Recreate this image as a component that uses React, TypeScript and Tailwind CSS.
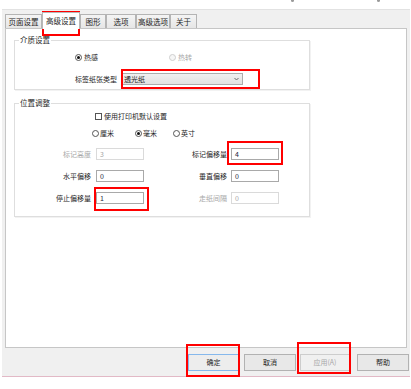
import React from 'react';

const Radio = ({ checked, disabled }: { checked?: boolean; disabled?: boolean }) => (
    <span className={`inline-flex h-[7px] w-[7px] shrink-0 items-center justify-center rounded-full border ${disabled ? 'border-[#cfcfcf] bg-[#f6f6f6]' : 'border-[#555] bg-white'}`}>
        {checked && <span className="h-[3px] w-[3px] rounded-full bg-[#111]" />}
    </span>
);

const Field = ({ value, disabled }: { value: string; disabled?: boolean }) => (
    <div className={`flex h-[12px] w-[48px] items-center border bg-white pl-[3px] text-[7px] leading-none ${disabled ? 'border-[#dadada] text-[#a8a8a8]' : 'border-[#a9a9a9] text-[#1d2340]'}`}>
        {value}
    </div>
);

const Tab = ({ label, w, active }: { label: string; w: string; active?: boolean }) => (
    <div
        className={`flex items-center justify-center border border-b-0 text-[7.5px] leading-none text-[#1e1e1e] ${w} ${active
            ? 'relative top-[1px] z-10 h-[17px] border-[#b8b8b8] bg-white'
            : 'h-[14px] border-[#b4b4b4] bg-gradient-to-b from-[#f4f4f4] to-[#e6e6e6]'}`}
    >
        {label}
    </div>
);

const Btn = ({ label, w, primary, disabled, className = '' }: { label: string; w: string; primary?: boolean; disabled?: boolean; className?: string }) => (
    <div
        className={`flex h-[17px] items-center justify-center border text-[7px] leading-none ${w} ${className} ${primary
            ? 'border-[#86b8ec] bg-[#ededed] text-[#1e1e1e]'
            : disabled
                ? 'border-[#cdcdcd] bg-[#f0f0f0] text-[#a8a8a8]'
                : 'border-[#b2b2b2] bg-[#e8e8e8] text-[#1e1e1e]'}`}
    >
        {label}
    </div>
);

// annotation boxes drawn on top of the screenshot
const Mark = ({ className }: { className: string }) => (
    <div className={`pointer-events-none absolute border-2 border-[#ff0000] ${className}`} />
);

export default function App() {
    return (
        <div className="relative h-[389px] w-[411px] overflow-hidden bg-white font-['Noto_Sans_CJK_SC','Noto_Sans',sans-serif] text-[#1e1e1e]">
            {/* top strip */}
            <div className="flex h-[9px] items-start">
                <span className="ml-[291px] h-[2px] w-[3px] rounded-b bg-[#9a9a9a]" />
                <span className="ml-[83px] h-[2px] w-[3px] rounded-b bg-[#9a9a9a]" />
            </div>

            {/* dialog */}
            <div className="ml-[2px] flex h-[368px] w-[408px] flex-col border-t border-b border-t-[#e2e2e2] border-b-[#e2b9c6] bg-[#f0f0f0]">
                {/* tabs */}
                <div className="mt-[2px] flex h-[16px] items-end pl-[3px]">
                    <Tab label="页面设置" w="w-[37px]" />
                    <Tab label="高级设置" w="w-[38px]" active />
                    <Tab label="图形" w="w-[26px]" />
                    <Tab label="选项" w="w-[30px]" />
                    <Tab label="高级选项" w="w-[34px]" />
                    <Tab label="关于" w="w-[27px]" />
                </div>

                {/* panel */}
                <div className="ml-[3px] flex h-[320px] w-[402px] flex-col border border-[#c6c6c6] bg-white">
                    {/* 介质设置 */}
                    <div className="relative ml-[8px] mt-[11px] h-[50px] w-[296px] border border-[#dedede] shadow-[1px_1px_0_#f2f2f2]">
                        <span className="absolute -top-[6px] left-[4px] bg-white px-[1px] text-[7.5px] leading-[10px]">介质设置</span>
                        <div className="flex h-[9px] items-center pl-[60px] mt-[12px] text-[7px]">
                            <div className="flex w-[94px] items-center gap-[2px]">
                                <Radio checked />
                                <span>热感</span>
                            </div>
                            <div className="flex items-center gap-[2px] text-[#a8a8a8]">
                                <Radio disabled />
                                <span>热转</span>
                            </div>
                        </div>
                        <div className="mt-[11px] flex h-[12px] items-center pl-[60px] text-[7px]">
                            <span className="w-[46px]">标签纸张类型</span>
                            <div className="flex h-[12px] w-[122px] items-center justify-between border border-[#acacac] bg-gradient-to-b from-[#f0f0f0] to-[#e2e2e2] pl-[2px] pr-[3px]">
                                <span>透光纸</span>
                                <svg width="5" height="4" viewBox="0 0 5 4">
                                    <path d="M0.5 1 L2.5 3 L4.5 1" fill="none" stroke="#6a6a6a" strokeWidth="1" />
                                </svg>
                            </div>
                        </div>
                    </div>

                    {/* 位置调整 */}
                    <div className="relative ml-[8px] mt-[13px] h-[114px] w-[296px] border border-[#dedede] text-[7px] shadow-[1px_1px_0_#f2f2f2]">
                        <span className="absolute -top-[6px] left-[4px] bg-white px-[1px] text-[7.5px] leading-[10px]">位置调整</span>
                        <div className="mt-[8px] flex h-[9px] items-center gap-[2px] pl-[80px]">
                            <span className="h-[7px] w-[7px] border border-[#555] bg-white" />
                            <span>使用打印机默认设置</span>
                        </div>
                        <div className="mt-[8px] flex h-[9px] items-center pl-[77px]">
                            <div className="flex w-[43px] items-center gap-[1px]">
                                <Radio />
                                <span>厘米</span>
                            </div>
                            <div className="flex w-[38px] items-center gap-[1px]">
                                <Radio checked />
                                <span>毫米</span>
                            </div>
                            <div className="flex items-center gap-[1px]">
                                <Radio />
                                <span>英寸</span>
                            </div>
                        </div>
                        <div className="mt-[10px] flex flex-col gap-[10px]">
                            <div className="flex h-[12px] items-center">
                                <span className="w-[76px] text-right text-[#a8a8a8]">标记高度</span>
                                <div className="ml-[5px]"><Field value="3" disabled /></div>
                                <span className="w-[83px] text-right">标记偏移量</span>
                                <div className="ml-[4px]"><Field value="4" /></div>
                            </div>
                            <div className="flex h-[12px] items-center">
                                <span className="w-[76px] text-right">水平偏移</span>
                                <div className="ml-[5px]"><Field value="0" /></div>
                                <span className="w-[83px] text-right">垂直偏移</span>
                                <div className="ml-[4px]"><Field value="0" /></div>
                            </div>
                            <div className="flex h-[12px] items-center">
                                <span className="w-[76px] text-right">停止偏移量</span>
                                <div className="ml-[5px]"><Field value="1" /></div>
                                <span className="w-[83px] text-right text-[#a8a8a8]">走纸间隔</span>
                                <div className="ml-[4px]"><Field value="0" disabled /></div>
                            </div>
                        </div>
                    </div>
                </div>

                {/* buttons */}
                <div className="mt-[6px] flex items-center pl-[186px]">
                    <Btn label="确定" w="w-[51px]" primary />
                    <Btn label="取消" w="w-[52px]" className="ml-[5px]" />
                    <Btn label="应用(A)" w="w-[50px]" disabled className="ml-[4px]" />
                    <Btn label="帮助" w="w-[52px]" className="ml-[7px]" />
                </div>
            </div>

            <Mark className="left-[42px] top-[11px] h-[25px] w-[38px]" />
            <Mark className="left-[121px] top-[69px] h-[20px] w-[139px]" />
            <Mark className="left-[227px] top-[141px] h-[24px] w-[56px]" />
            <Mark className="left-[94px] top-[187px] h-[24px] w-[55px]" />
            <Mark className="left-[186px] top-[344px] h-[33px] w-[54px]" />
            <Mark className="left-[297px] top-[342px] h-[32px] w-[54px]" />
        </div>
    );
}
